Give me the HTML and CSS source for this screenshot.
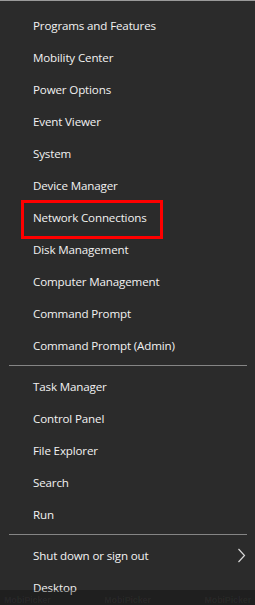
FILE: index.html
```html
<!DOCTYPE html>
<html>
<head>
<meta charset="utf-8">
<link rel="stylesheet" href="styles.css">
</head>
<body>
<div class="menu">
  <ul class="group first">
    <li class="item">Programs and Features</li>
    <li class="item">Mobility Center</li>
    <li class="item">Power Options</li>
    <li class="item">Event Viewer</li>
    <li class="item">System</li>
    <li class="item">Device Manager</li>
    <li class="item highlighted">Network Connections<span class="mark"></span></li>
    <li class="item">Disk Management</li>
    <li class="item">Computer Management</li>
    <li class="item">Command Prompt</li>
    <li class="item">Command Prompt (Admin)</li>
  </ul>
  <div class="sep"></div>
  <ul class="group">
    <li class="item">Task Manager</li>
    <li class="item">Control Panel</li>
    <li class="item">File Explorer</li>
    <li class="item">Search</li>
    <li class="item">Run</li>
  </ul>
  <div class="sep"></div>
  <ul class="group">
    <li class="item sub">Shut down or sign out
      <svg class="chev" width="9" height="15" viewBox="0 0 9 15"><polyline points="1.5,1 7.5,7.5 1.5,14" fill="none" stroke="#d8d8d8" stroke-width="1.2"/></svg>
    </li>
    <li class="item">Desktop</li>
  </ul>
  <div class="watermark"><span>MobiPicker</span><span>MobiPicker</span><span>MobiPicker</span></div>
</div>
</body>
</html>
```
FILE: styles.css
```css
html, body {
  margin: 0;
  padding: 0;
  background: #2b2b2b;
}
.menu {
  position: relative;
  width: 255px;
  height: 605px;
  box-sizing: border-box;
  border-top: 1px solid #9a9a9a;
  padding-top: 8px;
  background: #2b2b2b;
  overflow: hidden;
  font-family: "Open Sans", "Noto Sans", sans-serif;
  font-size: 11.6px;
  letter-spacing: -0.15px;
  color: #f2f2f2;
}
.group {
  list-style: none;
  margin: 0;
  padding: 0;
}
.item {
  position: relative;
  height: 32px;
  display: flex;
  align-items: center;
  padding-left: 33px;
  padding-right: 9px;
  white-space: nowrap;
}
.sub {
  justify-content: space-between;
}
.chev {
  display: block;
}
.sep {
  height: 1px;
  background: #858585;
  margin: 4px 8px 4px 9px;
}
.mark {
  position: absolute;
  left: 21px;
  top: -1px;
  width: 142px;
  height: 39px;
  box-sizing: border-box;
  border: 3px solid #ff0000;
}
.watermark {
  position: absolute;
  left: 0;
  right: 0;
  bottom: 0;
  height: 15px;
  background: rgba(0, 0, 0, 0.28);
  display: flex;
  justify-content: space-between;
  align-items: flex-end;
  padding: 0 4px;
  font-family: "Liberation Sans", sans-serif;
  font-size: 9px;
  line-height: 9px;
  font-weight: bold;
  color: rgba(255, 255, 255, 0.05);
}
```
